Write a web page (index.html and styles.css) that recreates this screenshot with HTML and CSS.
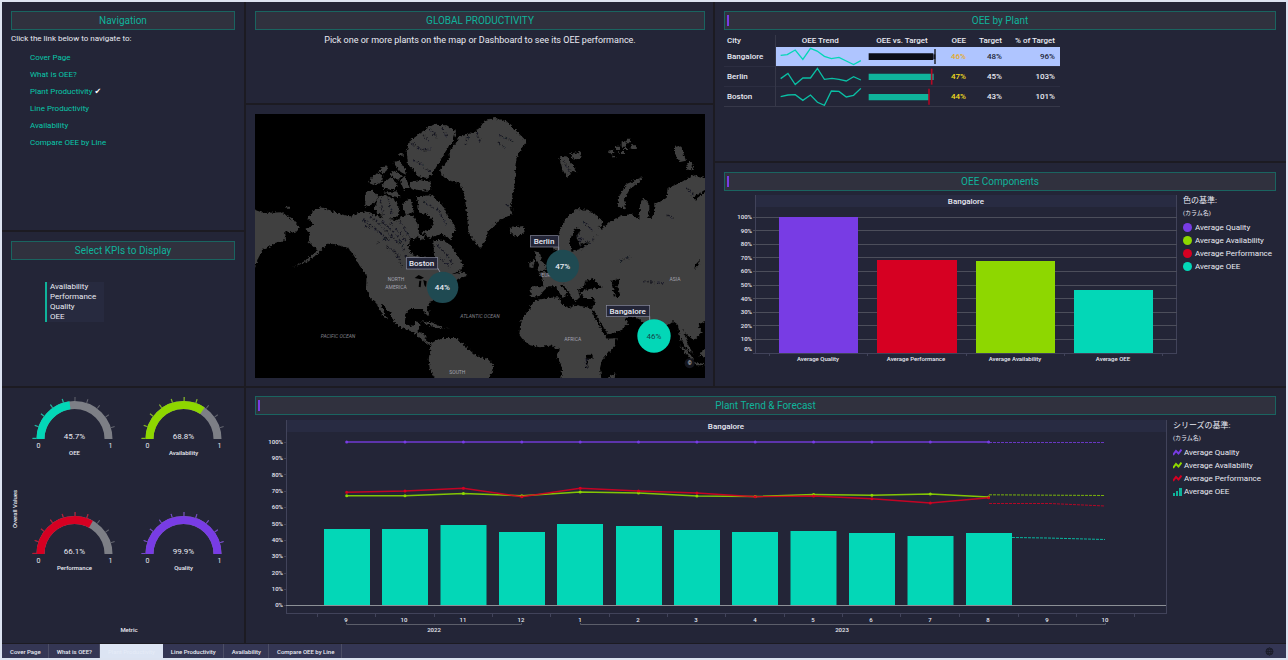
FILE: index.html
```html
<!DOCTYPE html>
<html lang="en">
<head>
<meta charset="utf-8">
<title>Plant Productivity</title>
<link rel="stylesheet" href="styles.css">
</head>
<body>
<main class="board">
  <div class="rail">
    <nav class="panel" aria-label="Pages">
      <h2 class="title">Navigation</h2>
      <p class="hint">Click the link below to navigate to:</p>
      <ul class="links">
        <li><a href="#cover">Cover Page</a></li>
        <li><a href="#what">What is OEE?</a></li>
        <li><a href="#plant">Plant Productivity</a> <span class="check">✔</span></li>
        <li><a href="#line">Line Productivity</a></li>
        <li><a href="#availability">Availability</a></li>
        <li><a href="#compare">Compare OEE by Line</a></li>
      </ul>
    </nav>
    <section class="panel">
      <h2 class="title">Select KPIs to Display</h2>
      <div class="kpis">
        <button type="button">Availability</button>
        <button type="button">Performance</button>
        <button type="button">Quality</button>
        <button type="button">OEE</button>
      </div>
    </section>
    <section class="panel bare">
      <svg class="chart" viewBox="2 388 242 255" role="img" aria-label="Overall values">
        <defs>
          <path id="arc" d="M-34 0A34 34 0 0 1 34 0" pathLength="100"/>
          <path id="tick" d="M-40 0A40 40 0 0 1 40 0" pathLength="100"/>
        </defs>
        <g transform="translate(74.5 439)">
          <use href="#arc" class="g-rest"/><use href="#arc" class="g-arc teal-s" stroke-dasharray="45.7 100"/>
          <use href="#tick" class="g-tick"/><use href="#tick" class="g-mark teal-s" stroke-dasharray="1 9.2 .8 9.2 .8 9.2 .8 9.2 .8 200"/>
          <text class="t8 mid" y="0">45.7%</text><text class="t7 mid" x="-36" y="9">0</text><text class="t7 mid" x="36" y="9">1</text><text class="t6 mid" y="16">OEE</text>
        </g>
        <g transform="translate(183.5 439)">
          <use href="#arc" class="g-rest"/><use href="#arc" class="g-arc lime-s" stroke-dasharray="68.8 100"/>
          <use href="#tick" class="g-tick"/><use href="#tick" class="g-mark lime-s" stroke-dasharray="1 9.2 .8 9.2 .8 9.2 .8 9.2 .8 9.2 .8 9.2 .8 200"/>
          <text class="t8 mid" y="0">68.8%</text><text class="t7 mid" x="-36" y="9">0</text><text class="t7 mid" x="36" y="9">1</text><text class="t6 mid" y="16">Availability</text>
        </g>
        <g transform="translate(74.5 554)">
          <use href="#arc" class="g-rest"/><use href="#arc" class="g-arc red-s" stroke-dasharray="66.1 100"/>
          <use href="#tick" class="g-tick"/><use href="#tick" class="g-mark red-s" stroke-dasharray="1 9.2 .8 9.2 .8 9.2 .8 9.2 .8 9.2 .8 9.2 .8 200"/>
          <text class="t8 mid" y="0">66.1%</text><text class="t7 mid" x="-36" y="9">0</text><text class="t7 mid" x="36" y="9">1</text><text class="t6 mid" y="16">Performance</text>
        </g>
        <g transform="translate(183.5 554)">
          <use href="#arc" class="g-rest"/><use href="#arc" class="g-arc violet-s" stroke-dasharray="99.9 100"/>
          <use href="#tick" class="g-tick"/><use href="#tick" class="g-mark violet-s" stroke-dasharray=".8 9.2"/>
          <text class="t8 mid" y="0">99.9%</text><text class="t7 mid" x="-36" y="9">0</text><text class="t7 mid" x="36" y="9">1</text><text class="t6 mid" y="16">Quality</text>
        </g>
        <text class="t6 mid" transform="translate(17 509) rotate(-90)">Overall Values</text>
        <text class="t6 mid" x="129" y="632">Metric</text>
      </svg>
    </section>
  </div>

  <div class="stage">
    <div class="upper">
      <div class="center">
        <section class="panel">
          <h2 class="title">GLOBAL PRODUCTIVITY</h2>
          <p class="hint centered">Pick one or more plants on the map or Dashboard to see its OEE performance.</p>
        </section>
        <section class="panel">
          <svg class="map" viewBox="0 0 1350 792" role="img" aria-label="Map of plants">
            <defs>
              <filter id="coast" x="-5%" y="-5%" width="110%" height="110%">
                <feTurbulence type="fractalNoise" baseFrequency=".14" numOctaves="2" seed="4" result="n"/>
                <feDisplacementMap in="SourceGraphic" in2="n" scale="14" xChannelSelector="R" yChannelSelector="G"/>
              </filter>
            </defs>
            <rect width="1350" height="792" fill="#000"/>
            <g filter="url(#coast)">
              <g transform="translate(-15 -18)" class="land">
                <path d="M172 330L195 305 212 298 240 307 270 318 300 325 325 315 345 310 365 318 400 330 440 337 470 320 490 325 504 350 502 370 497 385 480 395 476 420 485 438 510 446 530 450 545 462 553 484 562 470 552 440 550 397 575 395 600 410 620 440 642 470 628 490 600 500 622 496 655 508 640 505 625 512 600 520 575 545 560 570 538 585 531 600 539 622 526 617 516 603 480 603 466 618 465 648 488 656 500 640 512 648 502 670 522 678 530 698 548 706 540 712 518 697 500 680 480 668 455 660 430 640 420 612 392 585 402 612 412 635 394 615 378 585 360 570 348 540 350 500 330 475 310 440 295 420 260 410 235 405 215 425 200 440 170 462 125 478 160 462 195 435 200 422 175 402 180 375 165 365 190 350Z"/>
                <path d="M0 300L40 315 95 313 130 335 150 360 135 375 105 370 108 395 75 405 60 415 40 422 25 450 15 480 0 490ZM106 296h14v6h-14Z"/>
                <path d="M470 130L480 100 510 75 530 62 550 50 590 52 618 70 610 95 590 125 575 150 560 175 545 200 530 210 505 205 490 185 474 170Z"/>
                <path d="M480 222L510 216 542 222 540 248 505 246 480 240Z M345 296L348 250 368 248 386 268 368 288Z M372 302L387 268 405 262 430 272 448 300 442 328 405 335Z M357 222L375 196 400 202 396 222 376 230Z M385 190L408 170 415 184 400 196Z M398 228L422 208 444 226 430 246 402 242Z M416 198L435 188 457 203 444 215Z M428 162L448 158 464 182 468 200 452 192Z M450 218L464 204 480 238 462 246Z M456 288L480 270 492 308 468 322Z M400 254L440 250 452 268 424 264Z M448 136h10v8h-10Z"/>
                <path d="M500 265L545 262 568 282 582 300 605 340 617 365 605 380 606 400 590 385 575 378 540 390 514 372 542 362 552 340 532 318 508 314Z M470 350L500 348 508 380 490 396Z M505 380L525 382 520 395 505 392Z"/>
                <path d="M570 185L600 150 598 130 618 105 625 88 650 80 685 66 705 36 735 30 770 40 795 65 830 100 815 120 800 150 795 180 798 210 790 250 782 295 786 318 745 340 715 370 705 400 690 420 668 395 655 370 650 310 643 260 630 225 590 215 575 200Z"/>
                <path d="M536 752L545 705 572 690 620 690 640 710 680 745 712 752 730 770 725 795 705 830 565 830 540 785Z"/>
                <path d="M512 640L545 643 580 660 604 662 560 660 535 650Z M628 486L652 500 640 508 630 502Z"/>
              </g>
              <g transform="translate(675 -18)" class="land">
                <path d="M118 680L122 640 148 602 165 577 200 570 236 568 245 590 272 600 285 590 330 600 345 630 368 670 383 692 410 690 402 715 366 757 360 780 366 830 243 830 246 780 230 742 240 725 215 712 180 718 150 712 130 697Z"/>
                <path d="M152 565L152 535 190 535 187 510 173 495 210 490 225 470 232 440 222 420 235 380 258 330 290 303 322 305 350 322 368 340 362 358 348 354 366 362 390 342 420 325 455 318 478 336 480 290 490 270 505 285 505 335 522 320 523 288 560 270 563 240 600 225 640 200 690 215 690 638 655 648 665 675 642 697 620 680 609 662 625 712 640 738 615 715 600 690 594 650 580 640 555 655 530 725 515 720 498 650 478 634 450 622 436 630 446 645 420 668 380 682 360 650 333 603 342 590 345 570 310 570 298 552 318 545 350 540 368 540 352 524 340 512 315 518 312 537 294 545 300 568 285 580 270 558 250 530 240 532 264 556 248 570 226 535 205 535 190 550 178 565Z"/>
                <path d="M165 430L180 435 185 460 202 475 190 490 170 486 178 470 166 452Z M148 462L164 455 160 480 148 478Z M88 360L130 354 134 372 110 386 92 376Z M238 150L258 143 278 170 292 195 275 188 262 210 248 186Z M270 137L300 132 306 148 282 156Z M413 296L418 265 440 228 486 208 478 222 450 242 432 275 438 302Z M585 118L602 112 618 158 600 162 585 140Z M618 162L634 162 642 182 622 186Z M385 808L406 795 402 830 385 830Z M598 712L620 724 642 756 630 752Z M645 762L690 772 645 772Z M658 742L670 724 690 724 690 750Z"/>
                <path d="M388 128h14v8h-14ZM408 116h12v10h-12ZM425 100h12v16h-12ZM440 92h10v14h-10ZM452 112h16v10h-16ZM418 132h20v6h-20ZM398 142h10v6h-10ZM432 120h12v6h-12Z"/>
              </g>
              <g transform="translate(675 -18)" fill="#000">
                <path d="M275 432L268 400 285 360 300 364 290 390 300 410 328 402 302 422Z M393 518L420 512 412 535 422 566 405 568Z M318 740h20v12h-20Z M318 758h4v22h-4Z M333 605L342 610 386 684 376 684Z M640 478L660 455 656 470 645 482Z M640 268L675 245 678 250 645 275Z"/>
              </g>
            </g>
            <g class="specks" filter="url(#coast)" transform="translate(-15 -18)">
              <path d="M340 335L380 365 420 400M360 325L400 360 450 410M395 340L440 380 465 430M420 345L455 380 470 400M345 355L370 358M380 405L420 385M410 415L440 440 460 480M430 425L450 450M560 410L590 440 610 470M570 450L600 480M485 105L510 125 545 125M540 60L560 90M575 60L590 85M520 80L535 100M490 155L520 170M655 85L645 110M680 75L690 100M540 190L520 180M390 275L400 320M415 270L425 320M520 280L550 300M560 300L590 350M465 440L490 470M450 340L480 390"/>
              <path d="M990 390L1020 405 1040 380M1000 340L1030 370M1110 460L1140 445M1180 520L1240 525M1250 320L1270 330M1310 240L1330 260M770 290L790 305M745 80L790 100M1010 780L1010 750M745 105L765 120M980 380L1000 420M940 160L960 190"/>
            </g>
            <g class="lakes" transform="translate(-15 -18)"><path d="M494 510l12-9 16 8-10 5zM508 518l6 0-2 20-6-2zM520 516l10 4-2 18-5-6z"/></g>
            <g transform="translate(-15 -18)" class="maplabel">
              <text x="438" y="519">NORTH</text><text x="438" y="543">AMERICA</text>
              <text x="264" y="689" class="sea">PACIFIC OCEAN</text><text x="690" y="629" class="sea">ATLANTIC OCEAN</text>
              <text x="622" y="797">SOUTH</text><text x="968" y="699">AFRICA</text><text x="1275" y="520">ASIA</text><text x="902" y="508">EUROPE</text>
            </g>
            <g transform="translate(-15 -18)">
              <path class="lead" d="M563 480l8 14M926 416v20M1199 625v12"/>
              <circle class="pin" cx="578" cy="538" r="47"/><circle class="pin" cx="938" cy="474" r="49"/><circle class="pin on" cx="1212" cy="684" r="50"/>
              <text class="pct" x="577" y="546">44%</text><text class="pct" x="938" y="482">47%</text><text class="pct on" x="1212" y="692">46%</text>
              <rect class="tag" x="469" y="449" width="94" height="34"/><rect class="tag" x="841" y="383" width="84" height="34"/><rect class="tag" x="1069" y="592" width="130" height="34"/>
              <text class="pct" x="515" y="474">Boston</text><text class="pct" x="882" y="408">Berlin</text><text class="pct" x="1133" y="617">Bangalore</text>
              <circle cx="1319" cy="766" r="15" class="copy"/><text class="maplabel" x="1319" y="771">©</text>
            </g>
          </svg>
        </section>
      </div>

      <div class="side">
        <section class="panel">
          <h2 class="title grip">OEE by Plant</h2>
          <table class="plants">
            <thead><tr><th class="city">City</th><th class="trend">OEE Trend</th><th class="bullet">OEE vs. Target</th><th class="oee">OEE</th><th class="target">Target</th><th class="share">% of Target</th></tr></thead>
            <tbody>
              <tr class="picked"><th scope="row" class="city">Bangalore</th>
                <td class="pic"><svg viewBox="181 141 270 57"><polyline class="spark" points="195,166 215,164 239,150 262,178 285,145 305,153 327,169 348,176 371,172 393,183 415,194 437,182"/></svg></td>
                <td class="pic"><svg viewBox="451 141 222 57"><path fill="#0c0e16" d="M462 160h194v20H462z"/><path fill="#232537" d="M656 163h6v14h-6z"/><path stroke="#111" stroke-width="4" d="M661 147v45"/></svg></td>
                <td class="amber">46%</td><td>48%</td><td class="share">96%</td></tr>
              <tr><th scope="row" class="city">Berlin</th>
                <td class="pic"><svg viewBox="181 199 270 57"><polyline class="spark" points="195,234 217,218 239,252 262,232 285,232 306,203 327,236 350,233 371,236 393,241 415,228 437,238"/></svg></td>
                <td class="pic"><svg viewBox="451 199 222 57"><path class="teal-d" d="M462 219h195v19H462z"/><path stroke="#b40a25" stroke-width="5" d="M651 204v48"/></svg></td>
                <td class="yellow">47%</td><td>45%</td><td class="share">103%</td></tr>
              <tr><th scope="row" class="city">Boston</th>
                <td class="pic"><svg viewBox="181 258 270 57"><polyline class="spark" points="195,287 217,282 239,281 262,298 285,282 306,304 327,313 348,270 371,271 393,288 415,283 437,262"/></svg></td>
                <td class="pic"><svg viewBox="451 258 222 57"><path class="teal-d" d="M462 279h180v19H462z"/><path stroke="#c80020" stroke-width="4" d="M643 263v48"/></svg></td>
                <td class="yellow">44%</td><td>43%</td><td class="share">101%</td></tr>
            </tbody>
          </table>
        </section>

        <section class="panel">
          <h2 class="title grip">OEE Components</h2>
          <div class="plot">
            <svg class="chart" viewBox="724 191 459 180" role="img" aria-label="OEE components, Bangalore">
              <path class="strip" d="M755 195h422v12H755z"/>
              <path class="frame" d="M755.5 195v158M1176.5 195v158M753 353.500h424M769.500 353v3M867.500 353v3M966.500 353v3M1064.500 353v3M1162.500 353v3"/>
              <path class="gridline" d="M753 217.500h424M753 230.500h424M753 244.500h424M753 257.500h424M753 271.500h424M753 285.500h424M753 298.500h424M753 312.500h424M753 325.500h424M753 339.500h424"/>
              <path class="violet-f" d="M779 217h79v136h-79z"/><path class="red-f" d="M877 260h80v93h-80z"/><path class="lime-f" d="M976 261h79v92h-79z"/><path class="teal-f" d="M1074 290h79v63h-79z"/>
              <g class="t6 end"><text x="752" y="219">100%</text><text x="752" y="233">90%</text><text x="752" y="246">80%</text><text x="752" y="260">70%</text><text x="752" y="273">60%</text><text x="752" y="287">50%</text><text x="752" y="301">40%</text><text x="752" y="314">30%</text><text x="752" y="328">20%</text><text x="752" y="341">10%</text><text x="752" y="351">0%</text></g>
              <g class="t6 mid"><text x="818" y="361">Average Quality</text><text x="916" y="361">Average Performance</text><text x="1015" y="361">Average Availability</text><text x="1113" y="361">Average OEE</text></g>
              <text class="t8 mid strong" x="966" y="204">Bangalore</text>
            </svg>
            <aside class="legend">
              <h3>色の基準:</h3><p>(カラム名)</p>
              <ul>
                <li><i class="dot violet"></i>Average Quality</li>
                <li><i class="dot lime"></i>Average Availability</li>
                <li><i class="dot red"></i>Average Performance</li>
                <li><i class="dot teal"></i>Average OEE</li>
              </ul>
            </aside>
          </div>
        </section>
      </div>
    </div>

    <section class="panel">
      <h2 class="title grip">Plant Trend &amp; Forecast</h2>
      <div class="plot">
        <svg class="chart" viewBox="255 415 918 227" role="img" aria-label="Plant trend and forecast, Bangalore">
          <path class="strip" d="M286 420h880v12H286z"/>
          <path class="frame" d="M286.500 420v194M1166.500 420v194M286 613.500h880M317.500 614v3M375.500 614v3M434.500 614v3M492.500 614v3M550.500 614v3M609.500 614v3M667.500 614v3M725.500 614v3M784.500 614v3M842.500 614v3M900.500 614v3M959.500 614v3M1018.500 614v3M1076.500 614v3M1134.500 614v3M284 442.500h3M284 458.500h3M284 474.500h3M284 491.500h3M284 507.500h3M284 524.500h3M284 540.500h3M284 556.500h3M284 573.500h3M284 589.500h3M284 605.500h3"/>
          <path class="teal-f" d="M324 529h46v77h-46zM382 529h46v77h-46zM440.500 525h46v81h-46zM499 532h46v74h-46zM557 524h46v82h-46zM616 526h46v80h-46zM674 530h46v76h-46zM732 532h46v74h-46zM790.500 531h46v75h-46zM849 533h46v73h-46zM907.500 536h46v70h-46zM966 533h46v73h-46z"/>
          <path class="base" d="M286 605.500h880"/>
          <path class="line violet-s" d="M346.700 442H988.600"/>
          <path class="line lime-s" d="M346.700 495.700H405L463.400 493.500 521.800 495.700 580.200 492 638.500 493 696.900 496 755.200 496.500 813.600 494.500 871.900 495.300 930.300 494 988.600 497"/>
          <path class="line red-s" d="M346.700 492.300L405 491 463.400 488.200 521.800 496.700 580.200 488.200 638.500 491 696.900 493 755.200 496.700 813.600 496 871.900 498.700 930.300 503 988.600 497.700"/>
          <path class="node violet-s" d="M346.700 442h0M405 442h0M463.400 442h0M521.800 442h0M580.200 442h0M638.500 442h0M696.900 442h0M755.200 442h0M813.600 442h0M871.900 442h0M930.300 442h0M988.600 442h0"/>
          <path class="node lime-s" d="M346.700 495.700h0M405 495.700h0M463.400 493.500h0M521.800 495.700h0M580.200 492h0M638.500 493h0M696.900 496h0M755.200 496.500h0M813.600 494.500h0M871.900 495.300h0M930.300 494h0M988.600 497h0"/>
          <path class="node red-s" d="M346.700 492.300h0M405 491h0M463.400 488.200h0M521.800 496.700h0M580.200 488.200h0M638.500 491h0M696.900 493h0M755.200 496.700h0M813.600 496h0M871.900 498.700h0M930.300 503h0M988.600 497.700h0"/>
          <path class="future violet-s" d="M989 442.500H1105"/><path class="future lime-s" d="M989 494.800L1105 495.500"/><path class="future red-s" d="M989 503.500H1050L1105 506"/><path class="future teal-s" d="M1012 537.500L1047 538 1105 539.500"/>
          <g class="t6 end"><text x="283" y="444">100%</text><text x="283" y="460">90%</text><text x="283" y="477">80%</text><text x="283" y="493">70%</text><text x="283" y="509">60%</text><text x="283" y="526">50%</text><text x="283" y="542">40%</text><text x="283" y="558">30%</text><text x="283" y="575">20%</text><text x="283" y="591">10%</text><text x="283" y="607">0%</text></g>
          <g class="t6 mid"><text x="346" y="622">9</text><text x="404" y="622">10</text><text x="463" y="622">11</text><text x="521" y="622">12</text><text x="580" y="622">1</text><text x="638" y="622">2</text><text x="696" y="622">3</text><text x="755" y="622">4</text><text x="813" y="622">5</text><text x="871" y="622">6</text><text x="930" y="622">7</text><text x="988" y="622">8</text><text x="1047" y="622">9</text><text x="1105" y="622">10</text><text x="434" y="632">2022</text><text x="842" y="632">2023</text></g>
          <path class="brace" d="M346.500 623v1.500h175v-1.500M580.500 623v1.500h525v-1.500"/>
          <text class="t8 mid strong" x="726" y="429">Bangalore</text>
        </svg>
        <aside class="legend wide">
          <h3>シリーズの基準:</h3><p>(カラム名)</p>
          <ul>
            <li><svg class="key violet-s" viewBox="0 0 9 9"><path d="M0 7L3 3 5.500 5.500 8.500 1.500"/></svg>Average Quality</li>
            <li><svg class="key lime-s" viewBox="0 0 9 9"><path d="M0 7L3 3 5.500 5.500 8.500 1.500"/></svg>Average Availability</li>
            <li><svg class="key red-s" viewBox="0 0 9 9"><path d="M0 7L3 3 5.500 5.500 8.500 1.500"/></svg>Average Performance</li>
            <li><svg class="key" viewBox="0 0 9 9"><path class="teal-d" d="M0 6h2v3H0zM3 4h2v5H3zM6 1h3v8H6z"/></svg>Average OEE</li>
          </ul>
        </aside>
      </div>
    </section>
  </div>
</main>
<footer class="tabs">
  <a href="#cover">Cover Page</a><a href="#what">What is OEE?</a><a href="#plant" class="active" aria-current="page">Plant Productivity</a><a href="#line">Line Productivity</a><a href="#availability">Availability</a><a href="#compare">Compare OEE by Line</a>
  <button type="button" class="globe" aria-label="Language"><svg viewBox="0 0 9 9"><circle cx="4.500" cy="4.500" r="3.500"/><ellipse cx="4.500" cy="4.500" rx="1.500" ry="3.500"/><path d="M1 4.500h7M1.500 2.700h6M1.500 6.300h6"/></svg></button>
</footer>
</body>
</html>
```
FILE: styles.css
```css
:root {
  --bg: #232537;
  --teal: #03d7b7;
  --teal-dim: #0fb39b;
  --lime: #8ed700;
  --red: #d60022;
  --violet: #783ce4;
  --text: #e9eaf2;
}
* { box-sizing: border-box; }
body {
  margin: 0;
  min-height: 100vh;
  display: flex;
  flex-direction: column;
  border: 2px solid #dce3f1;
  background: #1c1b22;
  color: var(--text);
  font: 8px/10px Roboto, "Noto Sans CJK JP", sans-serif;
}
h2, h3, p, ul { margin: 0; padding: 0; font-weight: 400; }
ul { list-style: none; }
a { color: inherit; text-decoration: none; }
button { border: 0; padding: 0; background: none; color: inherit; font: inherit; }
svg { display: block; }

.board { flex: 1; display: grid; grid-template-columns: 242fr 1040fr; gap: 2px; }
.rail { display: grid; grid-template-rows: 228fr 154fr 255fr; gap: 2px; }
.stage { display: grid; grid-template-rows: 384fr 255fr; gap: 2px; }
.upper { display: grid; grid-template-columns: 467fr 571fr; gap: 2px; }
.center { display: grid; grid-template-rows: 101fr 281fr; gap: 2px; }
.side { display: grid; grid-template-rows: 159fr 223fr; gap: 2px; }
.panel { min-width: 0; min-height: 0; padding: 9px 9px 0; background: var(--bg); }
.center .panel { padding-right: 8px; }
.side .panel, .stage > .panel { padding-right: 10px; }
.stage > .panel { padding-top: 8px; }
.panel.bare { padding: 0; }

.title {
  height: 19px;
  border: 1px solid #1a6460;
  background: #30313e;
  color: var(--teal-dim);
  font-size: 10px;
  line-height: 18px;
  text-align: center;
}
.grip {
  background: linear-gradient(#783ce4, #783ce4) 2px 3px / 2px 11px no-repeat, #30313e;
}
.hint { padding-top: 4px; }
.hint.centered { padding-top: 5px; font-size: 9px; text-align: center; }
.links { padding: 5px 0 0 19px; color: #09c7aa; line-height: 17px; }
.check { color: #fff; font-family: "DejaVu Sans", sans-serif; }
.kpis {
  width: 59px;
  margin: 22px 0 0 34px;
  border-left: 2px solid var(--teal-dim);
  background: #272a3f;
  display: flex;
  flex-direction: column;
}
.kpis button { padding-left: 3px; text-align: left; }

.chart { width: 100%; height: auto; flex: 1; min-width: 0; }
.chart text, .map text { fill: var(--text); }
.map { width: 100%; height: auto; }
.t6 { font-size: 6px; font-weight: 500; }
.t7 { font-size: 7px; }
.t8 { font-size: 8px; }
.strong { font-weight: 500; }
.mid { text-anchor: middle; }
.end { text-anchor: end; }
.plot { display: flex; align-items: flex-start; }

.g-rest { fill: none; stroke: #7d7f86; stroke-width: 8; }
.g-arc { fill: none; stroke-width: 8; }
.g-tick { fill: none; stroke: #62646e; stroke-width: 4; stroke-dasharray: .8 9.2; }
.g-mark { fill: none; stroke-width: 4; opacity: .8; }

.teal-s { stroke: var(--teal); }
.lime-s { stroke: var(--lime); }
.red-s { stroke: var(--red); }
.violet-s { stroke: var(--violet); }
.teal-f { fill: var(--teal); }
.lime-f { fill: var(--lime); }
.red-f { fill: var(--red); }
.violet-f { fill: var(--violet); }
.teal-d { fill: var(--teal-dim); }

.strip { fill: #282b42; }
.frame { fill: none; stroke: #41435a; }
.gridline { stroke: #4c4e5b; }
.base { stroke: #8c9096; }
.brace { fill: none; stroke: #5c5e6a; }
.line { fill: none; stroke-width: 1.4; opacity: .9; }
.node { fill: none; stroke-width: 3; stroke-linecap: round; }
.future { fill: none; stroke-dasharray: 3 1; opacity: .8; }

.land { fill: #404040; }
.lakes { fill: #000; }
.specks { fill: none; stroke: #151620; stroke-width: 5; stroke-dasharray: 7 5 3 6; }
.maplabel, .map .maplabel text { fill: #a3a3b0; font-size: 15px; text-anchor: middle; }
.map .maplabel .sea { fill: #80808a; font-style: italic; }
.pin { fill: #1f4a52; }
.pin.on { fill: var(--teal); }
.lead { stroke: #8a8ca0; stroke-width: 3; }
.tag { fill: var(--bg); stroke: #8a8ca0; stroke-width: 2; }
.pct { font-size: 24px; font-weight: 500; text-anchor: middle; }
.map .pct.on { fill: #16444a; font-weight: 400; }
.copy { fill: #14151d; }

.plants { margin-top: 5px; border-collapse: collapse; table-layout: fixed; width: 336px; border-bottom: 1px solid #363849; }
.plants th, .plants td { height: 19px; padding: 0 5px 0 0; text-align: right; font-weight: 500; }
.plants thead th { height: 12px; }
.plants tbody tr + tr > * { border-top: 1px solid #2c2e41; }
.plants .city { width: 51px; padding: 0 0 0 3px; text-align: left; border-right: 1px solid #363849; }
.plants .trend { width: 90px; padding: 0; text-align: center; }
.plants .bullet { width: 74px; padding: 0; text-align: center; }
.plants .oee { width: 32px; }
.plants .target { width: 36px; }
.plants td.pic { padding: 0; }
.pic svg { width: 100%; height: 19px; }
.picked td { background: #afc5ff; color: #232537; }
.plants .amber { color: #e5aa25; }
.plants .yellow { color: #f2dc1e; }
.spark { fill: none; stroke: #0abfa4; stroke-width: 4; }
.picked .spark { stroke: var(--teal); }

.legend { flex: 0 0 93px; padding-top: 5px; white-space: nowrap; }
.legend.wide { flex-basis: 103px; padding-top: 6px; }
.legend h3 { font-size: 8px; line-height: 10px; }
.legend p { padding-top: 2px; font-size: 6px; line-height: 10px; }
.legend ul { padding-top: 3px; }
.legend li { display: flex; align-items: center; gap: 3px; line-height: 13px; }
.dot { width: 9px; height: 9px; border-radius: 50%; }
.violet { background: var(--violet); }
.lime { background: var(--lime); }
.red { background: var(--red); }
.teal { background: var(--teal); }
.key { width: 9px; height: 9px; fill: none; stroke-width: 2; }
.legend.wide li { gap: 2px; }

.tabs { display: flex; background: #343654; font-size: 6px; line-height: 14px; margin-top: 1px; }
.tabs a { padding: 1px 7px 0 8px; border-right: 1px solid #4c4e66; line-height: 13px; font-weight: 500; }
.tabs .active { background: #dce4f3; color: #e6ecf8; border-color: #dce4f3; font-weight: 400; }
.globe { margin-left: auto; padding-right: 12px; }
.globe svg { width: 9px; height: 9px; fill: none; stroke: #1c1d2a; stroke-width: 1; }
```
